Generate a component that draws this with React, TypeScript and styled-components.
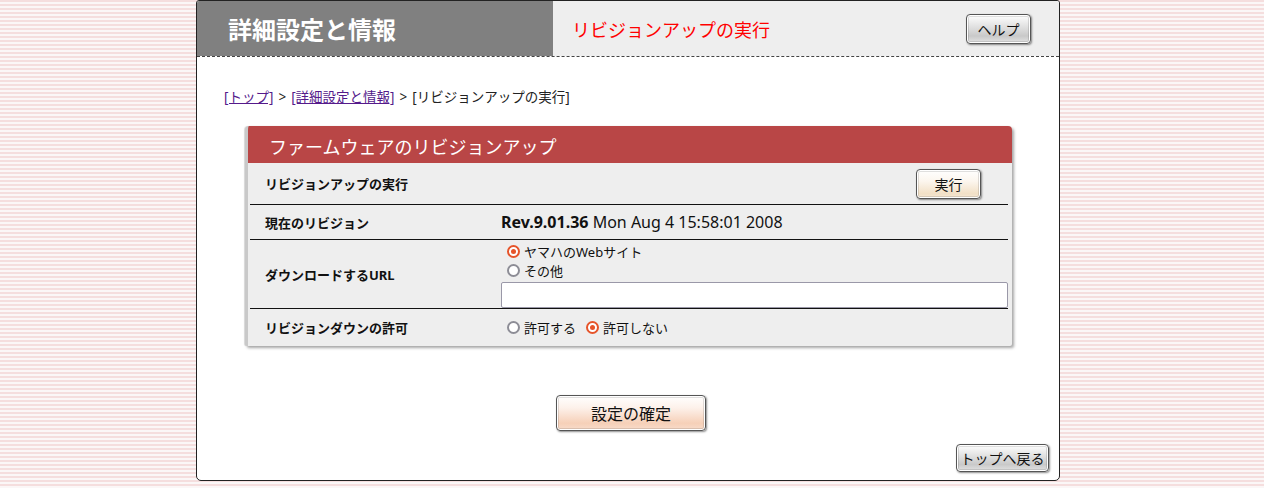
import React from "react";
import styled, { createGlobalStyle, css } from "styled-components";

const GlobalStyle = createGlobalStyle`
  html, body {
    margin: 0;
    padding: 0;
  }
  body {
    font-family: "Noto Sans", "Noto Sans CJK JP", sans-serif;
    color: #111;
    background: repeating-linear-gradient(
      to bottom,
      #f5dede 0px,
      #f5dede 2px,
      #fbf7f7 2px,
      #fbf7f7 4px
    );
    min-height: 488px;
  }
`;

const Page = styled.div`
  display: flex;
  justify-content: center;
  padding-right: 8px;
`;

const Frame = styled.div`
  width: 862px;
  height: 479px;
  background: #fff;
  border: 1px solid #222;
  border-radius: 3px 3px 5px 5px;
  display: flex;
  flex-direction: column;
  overflow: hidden;
`;

const Header = styled.div`
  display: flex;
  height: 55px;
  border-bottom: 1px dashed #444;
`;

const TitleBox = styled.div`
  width: 356px;
  background: #808080;
  display: flex;
  align-items: center;
  padding-left: 31px;
  box-sizing: border-box;
`;

const Title = styled.h1`
  margin: 0;
  color: #fff;
  font-size: 24px;
  font-weight: bold;
`;

const SubBox = styled.div`
  flex: 1;
  background: #eeeeee;
  display: flex;
  align-items: center;
  justify-content: space-between;
  padding: 0 28px 0 19px;
`;

const SubTitle = styled.span`
  color: #ff0000;
  font-size: 18px;
`;

type BtnVariant = "gray" | "cream" | "peach";

const gradients: Record<BtnVariant, string> = {
  gray: "linear-gradient(#ffffff 0%, #e6e6e6 35%, #c9c9c9 75%, #e4e4e4 100%)",
  cream: "linear-gradient(#ffffff 0%, #fcf6ee 40%, #f2e0c6 85%, #f6e9d8 100%)",
  peach: "linear-gradient(#ffffff 0%, #fdf1ea 35%, #f6d0b8 80%, #f8dccb 100%)",
};

const Button = styled.button<{ $variant: BtnVariant; $w: number; $h: number; $fs: number; $mr?: number }>`
  width: ${(p) => p.$w}px;
  height: ${(p) => p.$h}px;
  margin-right: ${(p) => p.$mr ?? 0}px;
  font-family: "Noto Sans CJK JP", "Noto Sans", sans-serif;
  font-size: ${(p) => p.$fs}px;
  color: #111;
  border: 1px solid #555;
  border-radius: 4px;
  background: ${(p) => gradients[p.$variant]};
  box-shadow: inset 0 0 0 1px #fff, inset 0 0 0 2px rgba(0, 0, 0, 0.12),
    1px 1px 2px rgba(0, 0, 0, 0.45);
  padding: 0;
  cursor: pointer;
  display: inline-flex;
  align-items: center;
  justify-content: center;
  flex-shrink: 0;
`;

const Body = styled.div`
  flex: 1;
  display: flex;
  flex-direction: column;
  padding: 31px 10px 8px 27px;
`;

const Crumbs = styled.div`
  font-size: 13.5px;
  color: #222;
  height: 18px;
  line-height: 18px;
  display: flex;
  align-items: center;
  a {
    color: #551a8b;
    text-decoration: underline;
  }
`;

const Sep = styled.span`
  margin: 0 5px;
`;

const Panel = styled.div`
  width: 764px;
  margin: 20px 0 0 21px;
  border-radius: 4px 4px 2px 2px;
  background: #eeeeee;
  border-left: 3px solid #c9c9c9;
  box-shadow: 2px 2px 3px rgba(0, 0, 0, 0.35), -1px 0 1px rgba(0, 0, 0, 0.15);
  overflow: hidden;
`;

const PanelHead = styled.div`
  height: 37px;
  background: #b94646;
  color: #fff;
  font-size: 18px;
  display: flex;
  align-items: center;
  padding-left: 24px;
  margin-left: -3px;
  padding-top: 2px;
  box-sizing: border-box;
  border-top-left-radius: 4px;
`;

const Rows = styled.div`
  padding: 0 4px 1px 2px;
`;

const Row = styled.div<{ $h: number; $last?: boolean }>`
  display: flex;
  align-items: center;
  min-height: ${(p) => p.$h}px;
  box-sizing: border-box;
  ${(p) =>
    !p.$last &&
    css`
      border-bottom: 1px solid #111;
    `}
`;

const Label = styled.div`
  width: 251px;
  padding-left: 15px;
  box-sizing: border-box;
  font-size: 13px;
  font-weight: bold;
  flex-shrink: 0;
`;

const Value = styled.div`
  flex: 1;
  display: flex;
  align-items: center;
  justify-content: space-between;
  font-size: 16px;
`;

const RevNum = styled.b`
  font-weight: bold;
`;

const ValueStack = styled.div`
  flex: 1;
  display: flex;
  flex-direction: column;
  padding: 2px 0 0;
`;

const RadioLine = styled.div`
  display: flex;
  align-items: center;
  height: 19px;
  font-size: 13px;
  gap: 10px;
  padding-left: 6px;
`;

const RadioOpt = styled.label`
  display: inline-flex;
  align-items: center;
  gap: 4px;
`;

const RadioDot = styled.span<{ $on?: boolean }>`
  width: 13px;
  height: 13px;
  box-sizing: border-box;
  border-radius: 50%;
  background: #fff;
  border: 2px solid ${(p) => (p.$on ? "#e6542a" : "#8d8d96")};
  display: inline-flex;
  align-items: center;
  justify-content: center;
  &::after {
    content: "";
    width: 5px;
    height: 5px;
    border-radius: 50%;
    background: ${(p) => (p.$on ? "#e6542a" : "transparent")};
  }
`;

const TextInput = styled.input`
  margin-top: 2px;
  height: 26px;
  width: 100%;
  box-sizing: border-box;
  border: 1px solid #9a98a8;
  border-radius: 2px;
  background: #fff;
  font-size: 13px;
`;

const Center = styled.div`
  display: flex;
  justify-content: center;
  margin-top: 49px;
  padding-right: 11px;
`;

const BottomRight = styled.div`
  display: flex;
  justify-content: flex-end;
  margin-top: auto;
`;

export default function App() {
  return (
    <>
      <GlobalStyle />
      <Page>
        <Frame>
          <Header>
            <TitleBox>
              <Title>詳細設定と情報</Title>
            </TitleBox>
            <SubBox>
              <SubTitle>リビジョンアップの実行</SubTitle>
              <Button $variant="gray" $w={65} $h={30} $fs={14}>
                ヘルプ
              </Button>
            </SubBox>
          </Header>
          <Body>
            <Crumbs>
              <a href="#">[トップ]</a>
              <Sep>&gt;</Sep>
              <a href="#">[詳細設定と情報]</a>
              <Sep>&gt;</Sep>
              <span>[リビジョンアップの実行]</span>
            </Crumbs>
            <Panel>
              <PanelHead>ファームウェアのリビジョンアップ</PanelHead>
              <Rows>
                <Row $h={42}>
                  <Label>リビジョンアップの実行</Label>
                  <Value>
                    <span />
                    <Button $variant="cream" $w={65} $h={30} $fs={14} $mr={27}>
                      実行
                    </Button>
                  </Value>
                </Row>
                <Row $h={35}>
                  <Label>現在のリビジョン</Label>
                  <Value>
                    <span>
                      <RevNum>Rev.9.01.36</RevNum> Mon Aug 4 15:58:01 2008
                    </span>
                  </Value>
                </Row>
                <Row $h={69}>
                  <Label>ダウンロードするURL</Label>
                  <ValueStack>
                    <RadioLine>
                      <RadioOpt>
                        <RadioDot $on />
                        ヤマハのWebサイト
                      </RadioOpt>
                    </RadioLine>
                    <RadioLine>
                      <RadioOpt>
                        <RadioDot />
                        その他
                      </RadioOpt>
                    </RadioLine>
                    <TextInput type="text" />
                  </ValueStack>
                </Row>
                <Row $h={36} $last>
                  <Label>リビジョンダウンの許可</Label>
                  <Value>
                    <RadioLine>
                      <RadioOpt>
                        <RadioDot />
                        許可する
                      </RadioOpt>
                      <RadioOpt>
                        <RadioDot $on />
                        許可しない
                      </RadioOpt>
                    </RadioLine>
                  </Value>
                </Row>
              </Rows>
            </Panel>
            <Center>
              <Button $variant="peach" $w={150} $h={36} $fs={16}>
                設定の確定
              </Button>
            </Center>
            <BottomRight>
              <Button $variant="gray" $w={93} $h={28} $fs={14}>
                トップへ戻る
              </Button>
            </BottomRight>
          </Body>
        </Frame>
      </Page>
    </>
  );
}
